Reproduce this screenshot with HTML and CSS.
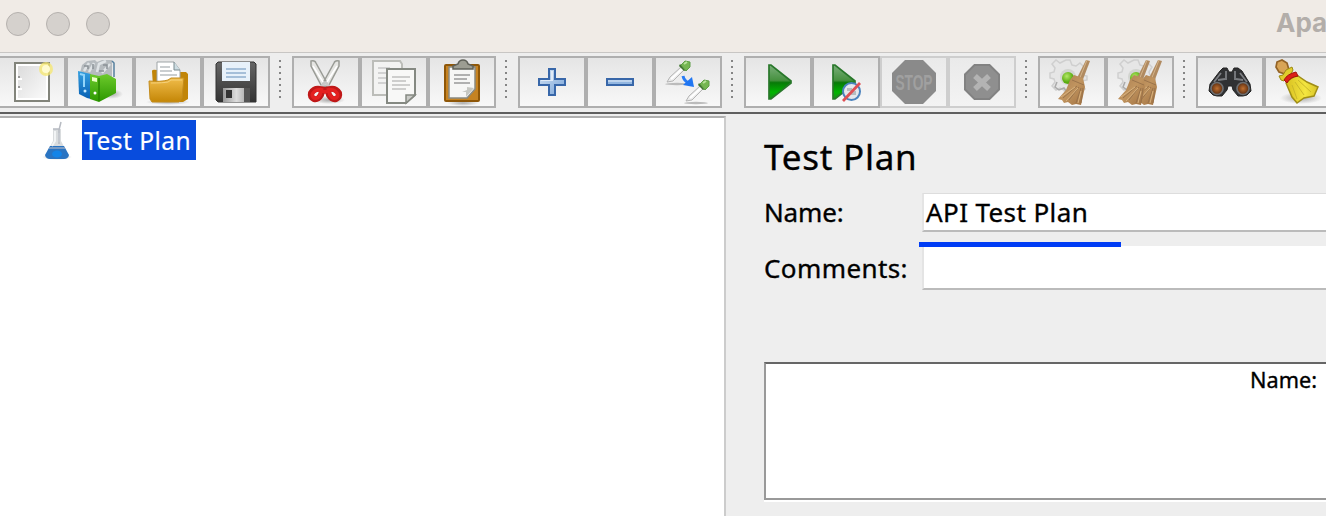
FILE: index.html
```html
<!DOCTYPE html>
<html lang="en">
<head>
<meta charset="utf-8">
<title>Apache JMeter</title>
<link rel="stylesheet" href="styles.css">
</head>
<body>
<div class="window">
<header class="titlebar">
<div class="lights"><i></i><i></i><i></i></div>
<span class="title">Apa</span>
</header>
<svg class="defs" width="0" height="0">
<defs>
<linearGradient id="paper" x2="1" y2="1"><stop offset="0" stop-color="#dcdcdc"/><stop offset="1" stop-color="#fafafa"/></linearGradient>
<linearGradient id="blue" x2="0" y2="1"><stop offset="0" stop-color="#36a0e0"/><stop offset="1" stop-color="#0860b4"/></linearGradient>
<linearGradient id="green" x2="0" y2="1"><stop offset="0" stop-color="#6dca2c"/><stop offset="1" stop-color="#2c9800"/></linearGradient>
<linearGradient id="gold" x2="0" y2="1"><stop offset="0" stop-color="#f0bc4a"/><stop offset="1" stop-color="#c48606"/></linearGradient>
<linearGradient id="metal" x2="1" y2="0"><stop offset="0" stop-color="#999"/><stop offset=".5" stop-color="#ddd"/><stop offset="1" stop-color="#999"/></linearGradient>
<linearGradient id="dark" x2="0" y2="1"><stop offset="0" stop-color="#666"/><stop offset="1" stop-color="#333"/></linearGradient>
<linearGradient id="plus" x2="1" y2="1"><stop offset="0" stop-color="#d6e4f4"/><stop offset="1" stop-color="#78a4d8"/></linearGradient>
<linearGradient id="play" x2="0" y2="1"><stop offset="0" stop-color="#7aae7a"/><stop offset=".45" stop-color="#46913f"/><stop offset=".52" stop-color="#087a08"/><stop offset=".8" stop-color="#00b400"/><stop offset="1" stop-color="#189018"/></linearGradient>
<radialGradient id="ball" cx=".4" cy=".35"><stop offset="0" stop-color="#b4e868"/><stop offset="1" stop-color="#5aac10"/></radialGradient>
<linearGradient id="straw" x2="1" y2="1"><stop offset="0" stop-color="#a87c50"/><stop offset=".5" stop-color="#c0945f"/><stop offset="1" stop-color="#a07040"/></linearGradient>
<linearGradient id="yellow" x2="1" y2="0"><stop offset="0" stop-color="#d8c020"/><stop offset=".6" stop-color="#f4e640"/><stop offset="1" stop-color="#d8c428"/></linearGradient>
<radialGradient id="lens"><stop offset="0" stop-color="#c07030"/><stop offset="1" stop-color="#5a2c10"/></radialGradient>
<radialGradient id="shade"><stop offset="0" stop-color="#777" stop-opacity=".6"/><stop offset="1" stop-color="#777" stop-opacity="0"/></radialGradient>
<g id="gear"><path d="M-2-17h4l2 5 4 1 4-3 4 4-3 5 1 3 5 1v4l-5 1-1 4 4 4-5 4-4-4-4 1-1 3h-6l-1-3-4-2-4 2-4-4 3-4-1-3-4-1v-5l4-1 1-4-3-4 4-4 4 3 4-2z" fill="#e6e6e6" stroke="#cfcfcf" stroke-width="1.500"/><path d="M-11 5l-2 5 4 3 5-2 3 4h5" fill="none" stroke="#aaa" stroke-width="1.500"/><circle r="8" fill="#d2d4d0"/><circle cy="1" r="6" fill="url(#ball)"/></g>
<g id="broom"><path d="M21-20l4 1-8 21-6-2z" fill="#b08a60"/><path d="M22-20l-8 20" stroke="#d4b48a"/><path d="M9-5l9 3 2 9-4 18-5-1-4 1-4-3-4 1-2-3-4-1 8-9 4-10z" fill="url(#straw)"/><path d="M7 0l12 5M12 6L-2 18M14 7L4 20M16 8l-5 15M18 8l-2 15" stroke="#96704a" stroke-width=".9" fill="none"/><path d="M13 8L1 21M16 11l-3 12M10 7L-4 17" stroke="#d8b27e" fill="none"/></g>
<g id="dropper"><ellipse cx="10" cy="23" rx="12" ry="1.200" fill="#bbb"/><path d="M0 21l3-5L14 6l3 3L6 20z" fill="#ececec" stroke="#b4b4b4"/><path d="M4 18L15 8" stroke="#fff" stroke-width="2"/><path d="M12 5l5 5 2-1-6-6z" fill="#3e742f"/><path d="M14 4l4-4 5 1v5l-4 4z" fill="#75b652" stroke="#5f9e48"/><path d="M17 3l3-2" stroke="#b8e39c" stroke-width="2"/></g>
</defs>
</svg>
<nav class="toolbar">
<div class="group first">
<button class="tool"><svg viewBox="0 58 64 48"><rect x="15" y="63" width="34" height="38" fill="#fff" stroke="#82847b" stroke-width="2"/><rect x="18" y="66" width="28" height="32" fill="url(#paper)"/><path d="M18 76h2v2h2v2h-4zM18 86h2v2h2v2h-4z" fill="#fff"/><path d="M18 76h2v2h-2zM18 86h2v2h-2z" fill="#999"/><circle cx="46" cy="69" r="7" fill="#f5e76d" opacity=".75"/><circle cx="46" cy="69" r="4" fill="#fffbd0"/></svg></button>
<button class="tool"><svg viewBox="68 58 64 48"><ellipse cx="111" cy="94" rx="12" ry="5" fill="url(#shade)"/><path d="M80 73l2-8 5-4 8-1 2 2 5-2h10v18l-18 3z" fill="#b6bbbf"/><path d="M84 71l5-8M89 72l5-9M97 72l2-8 7-3M102 73l8-9" stroke="#dfe3e6" stroke-width="2.500" fill="none"/><path d="M84 66h4v3M93 64v5M103 65h4v4M99 71h5" stroke="#8b9196" fill="none" stroke-width="1.500"/><path d="M112 61l2 2v14" stroke="#56809e" stroke-width="1.500" fill="none"/><path d="M78 71l13 3v25l-4-1-8-4z" fill="url(#blue)"/><path d="M80 74l4 1v12" stroke="#92d5fa" stroke-width="2" fill="none"/><path d="M90 74l9 2 8-2 9 5v14l-17 9-9-3z" fill="url(#green)"/><path d="M99 78v23" stroke="#268500" stroke-width="1.500"/><path d="M92 77l5 1v4l-5-1z" fill="#eaffc6"/><circle cx="95" cy="93" r="1.500" fill="#fff"/><circle cx="85" cy="91" r="1.500" fill="#c8eaff"/></svg></button>
<button class="tool"><svg viewBox="136 58 64 48"><ellipse cx="168" cy="102" rx="22" ry="3" fill="url(#shade)"/><path d="M152 71q0-2 5-1v8h23v-6h6l2 2v25l-5 3H154z" fill="#c18508"/><path d="M157 62h17l6 8v13h-23z" fill="#fff" stroke="#9fa5a7"/><path d="M174 62v8h6" fill="#cddde3" stroke="#7a8b90"/><path d="M160 67h10M160 71h12M160 75h17" stroke="#b9bfc1" stroke-width="1.500"/><path d="M149 81q12 1 19-1l3-2h13l-2 20-3 4h-27l-2-3z" fill="url(#gold)" stroke="#c48c1c"/><path d="M151 83q12 0 17-1l3-2h11" stroke="#f6d27b" fill="none"/></svg></button>
<button class="tool"><svg viewBox="204 58 64 48"><path d="M216 64l2-2h36l2 2v38h-38l-2-2z" fill="url(#dark)" stroke="#333"/><path d="M222 62h28v19h-28z" fill="#e7f1fa"/><path d="M226 69h20M226 73h20M226 77h20" stroke="#a5bfd9" stroke-width="1.800"/><path d="M223 88h27v14h-27z" fill="url(#metal)"/><rect x="226" y="90" width="6" height="8" fill="#333"/><path d="M244 88h6v14h-6z" fill="#555"/></svg></button>
</div>
<i class="grip"></i>
<div class="group">
<button class="tool"><svg viewBox="294 58 64 48"><ellipse cx="329" cy="100" rx="16" ry="4" fill="url(#shade)"/><path d="M311 61q4-1 5 2l11 20-2 5-4-3-10-19zM339 61q-4-1-5 2l-11 20 2 5 4-3 10-19z" fill="#e5e5e2" stroke="#999b95" stroke-width="1.500"/><path d="M313 66l12 19M337 66l-12 19" stroke="#fff" stroke-width="1.500"/><path d="M325 82l-4 6M325 82l5 6" stroke="#c8c8c8" stroke-width="3"/><path d="M323 88l-2 7q-3 5-7 4-4-2-3-6 3-5 9-4 5 0 5 3 0-3 5-3 6-1 9 4 1 4-3 6-4 1-7-4l-2-7" fill="none" stroke="#c01818" stroke-width="6"/><path d="M322 88l-2 7q-2 4-6 3-3-2-1-5 3-4 8-3l4 2 4-2q5-1 8 3 2 3-1 5-4 1-6-3l-2-7" fill="none" stroke="#e42020" stroke-width="3.500"/></svg></button>
<button class="tool"><svg viewBox="362 58 64 48"><path d="M373 61h27l2 3v31h-29z" fill="#f3f3f2" stroke="#bcbdb9" stroke-width="2"/><path d="M378 68h12M378 73h10M378 78h10M378 83h10" stroke="#d2d2d2" stroke-width="2"/><path d="M387 69h28v26l-9 8h-19z" fill="#f8f8f7" stroke="#858982" stroke-width="2"/><path d="M392 77h18M392 81h14M392 85h18M392 89h14" stroke="#c0c0c0" stroke-width="1.700"/><path d="M415 95h-9v8z" fill="#cacbc7" stroke="#858982" stroke-width="1.500"/></svg></button>
<button class="tool"><svg viewBox="430 58 64 48"><ellipse cx="463" cy="103" rx="16" ry="3" fill="url(#shade)"/><rect x="445" y="65" width="34" height="36" rx="1" fill="#c68322" stroke="#8f5708" stroke-width="2"/><path d="M449 67h26v22l-8 9h-18z" fill="#f6f6f5" stroke="#898a83" stroke-width="1.500"/><path d="M454 75h16M454 79h13M454 83h16" stroke="#999" stroke-width="1.600"/><path d="M474 88l-8 9v-5h-4l5-2v-3z" fill="#c6c7c2"/><path d="M453 69v-3l5-2q1-4 5-4t5 4l5 2v3z" fill="#9c9d92" stroke="#5f6159" stroke-width="1.500"/></svg></button>
</div>
<i class="grip"></i>
<div class="group">
<button class="tool"><svg viewBox="520 58 64 48"><path d="M549 69h6v10h10v6h-10v10h-6V85h-10v-6h10z" fill="url(#plus)" stroke="#3867a9" stroke-width="2"/><path d="M551 71h2v10h-12v-1h10z" fill="#e1ebf7"/></svg></button>
<button class="tool"><svg viewBox="588 58 64 48"><rect x="607" y="79" width="26" height="6" fill="#92b6e0" stroke="#3867a9" stroke-width="2"/><path d="M608 81h24" stroke="#bed4ed" stroke-width="2"/></svg></button>
<button class="tool"><svg viewBox="656 58 64 48"><use href="#dropper" x="667" y="61"/><use href="#dropper" x="686" y="80"/><path d="M683 76q1 5 6 7" fill="none" stroke="#287cf5" stroke-width="3"/><path d="M692 77l2 10-11-2z" fill="#2076f2"/></svg></button>
</div>
<i class="grip"></i>
<div class="group">
<button class="tool"><svg viewBox="746 58 64 48"><path d="M769 65h2l20 16v2l-20 16h-2z" fill="url(#play)" stroke="#28772a" stroke-width="1.700"/></svg></button>
<button class="tool"><svg viewBox="814 58 64 48"><path d="M833 65h2l20 16v2l-20 16h-2z" fill="url(#play)" stroke="#28772a" stroke-width="1.700"/><circle cx="851.500" cy="91.500" r="8.500" fill="#e5e7ec" stroke="#4c83bd" stroke-width="2"/><path d="M847 88h5v3h4v4h-5v-4h-4z" fill="#b7bcc0"/><path d="M843 101l17-18" stroke="#df5055" stroke-width="2.800"/></svg></button>
<button class="tool off"><svg viewBox="882 58 64 48"><path d="M905 60h18l13 13v18l-13 13h-18l-13-13V73z" fill="#8a8a8a"/><text x="895.500" y="90" class="stop" textLength="37" lengthAdjust="spacingAndGlyphs">STOP</text></svg></button>
<button class="tool off"><svg viewBox="950 58 64 48"><path d="M974.500 65h15l9.500 9.500v15l-9.500 9.500h-15l-9.500-9.500v-15z" fill="#8f8f8f" stroke="#828282" stroke-width="2"/><path d="M975 76l14 13M989 76l-14 13" stroke="#b3b3b3" stroke-width="5.500"/></svg></button>
</div>
<i class="grip"></i>
<div class="group">
<button class="tool"><svg viewBox="1040 58 64 48"><use href="#gear" x="1068" y="77"/><use href="#broom" x="1065" y="80"/></svg></button>
<button class="tool"><svg viewBox="1108 58 64 48"><use href="#gear" x="1136" y="77"/><use href="#broom" x="1137" y="80"/><use href="#broom" x="1125" y="80"/></svg></button>
</div>
<i class="grip"></i>
<div class="group">
<button class="tool"><svg viewBox="1198 58 64 48"><path d="M1220 71l3-3h4l2 4h3l2-4h4l4 3 8 13 1 7-4 4-4 1h-5l-5-6-1-4h-4l-1 4-5 6h-5l-4-1-4-4 1-7z" fill="#303133" stroke="#242424"/><path d="M1221 73l-7 9M1240 73l7 9M1226 71v9M1235 71v9M1218 80l7-1M1236 79l7 1" stroke="#7c7e82" stroke-width="1.800"/><circle cx="1217" cy="88.500" r="6" fill="url(#lens)" stroke="#6c6e71" stroke-width="1.700"/><circle cx="1243" cy="88.500" r="6" fill="url(#lens)" stroke="#6c6e71" stroke-width="1.700"/></svg></button>
<button class="tool"><svg viewBox="1266 58 64 48"><ellipse cx="1301" cy="98" rx="21" ry="6" fill="url(#shade)"/><path d="M1277 62l5-2 5 3 2 7-4 4-6-2-3-5z" fill="#d8a456" stroke="#936326" stroke-width="1.700"/><path d="M1279 76l4-1 3-5 6-3 1 3-2 4-7 7-3-1z" fill="#e0cc2c" stroke="#9d8b14"/><path d="M1286 83q6-7 12-7l9 6 11 5-4 9-10 2-7 5-5-6z" fill="url(#yellow)" stroke="#a08e18" stroke-width="1.500"/><path d="M1292 85l5 14M1295 82l9 13M1298 80l13 12" stroke="#cbb82a"/><path d="M1284 80q3-6 12-8l2 4q-8 1-11 7z" fill="#dc2018" stroke="#a5120f"/></svg></button>
</div>
</nav>
<main class="content">
<aside class="tree">
<div class="node">
<svg class="flask" viewBox="42 120 32 40"><ellipse cx="57" cy="157" rx="15" ry="3" fill="url(#shade)"/><path d="M53 129h8v12l8 15q-1 3-5 3H50q-4 0-5-3l8-15z" fill="#d9dcde"/><path d="M50 146h14l5 9q-1 4-5 4H50q-4 0-5-4z" fill="#2a74c2"/><path d="M49 148h16" stroke="#7a9cc4" stroke-width="2"/><path d="M55 131v10l-3 5M59 133v9" stroke="#f2f4f5" stroke-width="2" fill="none"/><path d="M61 122l-2 8v14M53 129h7" stroke="#b7bbc2" stroke-width="1.500" fill="none"/><ellipse cx="57" cy="154" rx="5" ry="3.500" fill="#1484e8"/></svg>
<span class="label"><span>Test Plan</span></span>
</div>
</aside>
<section class="panel">
<h1>Test Plan</h1>
<div class="row name"><label>Name:</label><div class="field">API Test Plan<i class="marker"></i></div></div>
<div class="row comments"><label>Comments:</label><div class="field"></div></div>
<div class="variables"><span>Name:</span></div>
</section>
</main>
</div>
</body>
</html>
```
FILE: styles.css
```css
* { box-sizing: border-box; }
body { margin: 0; background: #eee; overflow: hidden; }
.window { width: 1326px; height: 516px; overflow: hidden; display: flex; flex-direction: column; font-family: "Noto Sans", sans-serif; color: #000; }
.defs { position: absolute; }
.titlebar { flex: none; height: 53px; background: #f0ebe6; border-bottom: 1px solid #c8c6c4; display: flex; justify-content: space-between; padding: 12px 0 0 6px; }
.lights { display: flex; gap: 16px; }
.lights i { width: 24px; height: 24px; border-radius: 50%; background: #d5d1cd; border: 1px solid #b5b1ae; }
.title { width: 50px; font: bold 26px/21px Inter, sans-serif; color: #b3aeaa; white-space: nowrap; }
.toolbar { flex: none; height: 61px; padding-top: 3px; border-bottom: 2px solid #5f5f5f; background: #eee; display: flex; }
.group { display: flex; flex: none; }
.first { margin-left: -2px; }
.tool { flex: none; width: 68px; height: 52px; margin: 0; padding: 0; border: 2px solid #afafaf; background: linear-gradient(#e5e5e5, #f8f8f8); }
.tool svg { display: block; width: 64px; height: 48px; }
.off { border-color: #cecece; background: linear-gradient(#eaeaea, #f3f3f3); }
.stop { font: bold 22px "Liberation Sans", sans-serif; fill: #a0a0a0; }
.grip { flex: none; width: 22px; height: 38px; margin-top: 4px; background: repeating-linear-gradient(#858585 0 2px, transparent 2px 6px) 9px 0 / 2px 38px no-repeat; }
.content { flex: 1; display: flex; }
.tree { width: 726px; margin-top: 2px; border-top: 2px solid #afafaf; border-right: 2px solid #ccc; background: #fff; padding: 2px 0 0 42px; }
.node { display: flex; height: 40px; }
.flask { width: 32px; height: 40px; }
.label { margin-left: 8px; width: 114px; padding-left: 2px; background: #084cdd; color: #fff; font-size: 24.5px; line-height: 41px; letter-spacing: .5px; white-space: nowrap; -webkit-text-stroke: .2px; }
.panel { flex: 1; min-width: 0; padding: 19px 0 0 38px; -webkit-text-stroke: .35px; }
h1 { margin: 0; height: 60px; font-weight: 400; font-size: 35px; line-height: 48px; letter-spacing: .75px; }
.row { display: flex; font-size: 26px; white-space: nowrap; }
.row label { width: 158px; line-height: 39px; }
.name label { letter-spacing: -.15px; }
.field { flex: 1; background: #fff; border-left: 2px solid #e4e4e4; border-bottom: 2px solid #bbb; }
.name .field { position: relative; border-top: 1px solid #ddd; padding-left: 2px; line-height: 37px; letter-spacing: .4px; }
.name { height: 39px; }
.marker { position: absolute; left: -5px; top: 48px; width: 202px; height: 5px; background: #003cf5; }
.comments { height: 44px; margin-top: 14px; }
.comments label { line-height: 45px; letter-spacing: .4px; }
.variables { height: 138px; margin-top: 72px; border-top: 2px solid #666; border-left: 2px solid #999; border-bottom: 2px solid #999; background: #fff; box-shadow: 0 2px #fff; display: flex; justify-content: flex-end; padding: 0 9px 0 0; font-size: 21.7px; line-height: 32px; }
```
